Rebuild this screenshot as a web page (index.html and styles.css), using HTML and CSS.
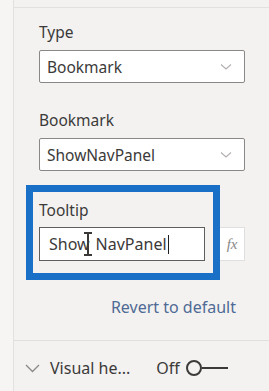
FILE: index.html
```html
<!DOCTYPE html>
<html lang="en">
<head>
    <meta charset="UTF-8">
    <meta name="viewport" content="width=device-width, initial-scale=1.0">
    <title>Button action</title>
    <link rel="stylesheet" href="styles.css">
</head>
<body>
    <div class="pane">
        <div class="rail"></div>
        <div class="main">
            <div class="top-strip"></div>

            <div class="field first">
                <div class="label">Type</div>
                <div class="select">
                    <span>Bookmark</span>
                    <svg class="chev" width="12" height="8" viewBox="0 0 12 8"><path d="M1 1.5 L6 6 L11 1.5" fill="none" stroke="#b3b0ad" stroke-width="1.1"/></svg>
                </div>
            </div>

            <div class="field">
                <div class="label">Bookmark</div>
                <div class="select">
                    <span>ShowNavPanel</span>
                    <svg class="chev" width="12" height="8" viewBox="0 0 12 8"><path d="M1 1.5 L6 6 L11 1.5" fill="none" stroke="#b3b0ad" stroke-width="1.1"/></svg>
                </div>
            </div>

            <div class="field tooltip-field">
                <div class="highlight"></div>
                <div class="label">Tooltip</div>
                <div class="input-row">
                    <div class="text-input">
                        <span>Show</span><span class="ibeam"></span><span class="rest">NavPanel</span><span class="caret"></span>
                    </div>
                    <div class="fx">fx</div>
                </div>
            </div>

            <div class="revert">Revert to default</div>

            <div class="card-row">
                <svg class="row-chev" width="15" height="9" viewBox="0 0 15 9"><path d="M1 1 L7.5 7.5 L14 1" fill="none" stroke="#8a8886" stroke-width="1.3"/></svg>
                <span class="row-title">Visual he...</span>
                <span class="row-state">Off</span>
                <div class="toggle">
                    <span class="knob"></span>
                    <span class="track"></span>
                </div>
            </div>
        </div>
    </div>
</body>
</html>
```

FILE: styles.css
```css
body {
    margin: 0;
    background-color: #f3f2f1;
    font-family: "Noto Sans", "Open Sans", sans-serif;
    color: #3b3a39;
    width: 269px;
    height: 391px;
    overflow: hidden;
}
.pane {
    display: flex;
    height: 391px;
}
.rail {
    width: 13px;
    background-color: #f6f5f4;
    border-right: 1px solid #e3e1df;
}
.main {
    flex: 1;
}
.top-strip {
    height: 7px;
    border-bottom: 1px solid #e3e1df;
}
.field {
    padding-left: 25px;
    width: 206px;
    margin-top: 27px;
}
.field.first {
    margin-top: 14px;
}
.label {
    font-size: 15.5px;
    line-height: 20px;
    margin-bottom: 8px;
}
.select {
    display: flex;
    align-items: center;
    justify-content: space-between;
    box-sizing: border-box;
    height: 33px;
    border: 1px solid #8a8886;
    border-radius: 2px;
    background-color: #fff;
    padding: 0 12px 0 7px;
    font-size: 15.5px;
}
.chev {
    display: block;
}
.tooltip-field {
    position: relative;
}
.field.tooltip-field {
    margin-top: 29px;
}
.tooltip-field .label {
    margin-bottom: 7px;
}
.highlight {
    position: absolute;
    left: 12px;
    top: -15px;
    width: 180px;
    height: 81px;
    border: 7px solid #1a70c7;
}
.input-row {
    display: flex;
    gap: 14px;
}
.text-input {
    display: flex;
    align-items: center;
    box-sizing: border-box;
    width: 167px;
    height: 34px;
    border: 1px solid #605e5c;
    background-color: #fff;
    padding-left: 9px;
    font-size: 16px;
}
.ibeam {
    position: relative;
    width: 0;
    height: 24px;
    margin-left: -2px;
}
.ibeam::before {
    content: "";
    position: absolute;
    left: -1px;
    top: 1px;
    width: 2px;
    height: 22px;
    background-color: #3b3a39;
}
.ibeam::after {
    content: "";
    position: absolute;
    left: -4px;
    top: 0;
    width: 8px;
    height: 24px;
    border-top: 2px solid #3b3a39;
    border-bottom: 2px solid #3b3a39;
    box-sizing: border-box;
}
.rest {
    margin-left: 8px;
}
.caret {
    width: 1px;
    height: 19px;
    background-color: #201f1e;
    margin-left: 1px;
}
.fx {
    box-sizing: border-box;
    width: 26px;
    height: 34px;
    border: 1px solid #e1dfdd;
    background-color: #fff;
    font-family: "Liberation Serif", serif;
    font-style: italic;
    font-size: 15px;
    color: #8a8886;
    display: flex;
    align-items: center;
    justify-content: center;
}
.revert {
    margin-top: 36px;
    width: 222px;
    text-align: right;
    font-size: 16px;
    line-height: 20px;
    color: #4f6a94;
}
.card-row {
    margin-top: 23px;
    border-top: 1px solid #e1dfdd;
    height: 54px;
    display: flex;
    align-items: center;
    padding-left: 11px;
    font-size: 16px;
}
.row-chev {
    display: block;
}
.row-title {
    margin-left: 10px;
}
.row-state {
    margin-left: 26px;
}
.toggle {
    display: flex;
    align-items: center;
    margin-left: 6px;
}
.knob {
    width: 12px;
    height: 12px;
    border: 2px solid #3b3a39;
    border-radius: 50%;
}
.track {
    width: 26px;
    height: 2px;
    background-color: #3b3a39;
}
```
